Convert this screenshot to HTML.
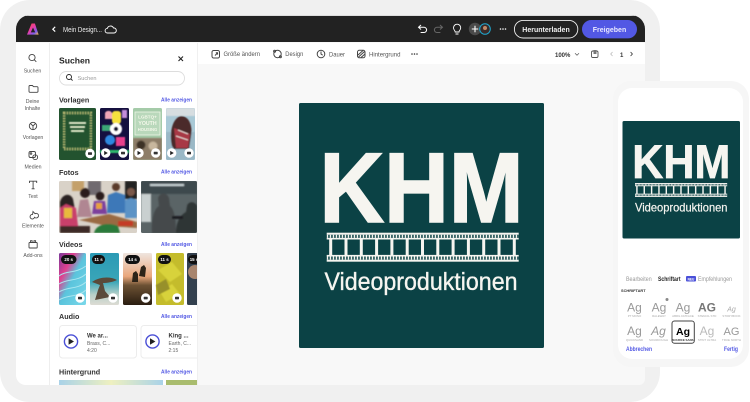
<!DOCTYPE html>
<html lang="de"><head><meta charset="utf-8"><title>Adobe Express</title>
<style>html,body{margin:0;padding:0;background:#fff;width:750px;height:402px;overflow:hidden}svg{display:block;filter:blur(.3px)}text{font-family:"Liberation Sans",sans-serif}</style></head>
<body>
<svg width="750" height="402" viewBox="0 0 750 402" xmlns="http://www.w3.org/2000/svg">
<defs>
<clipPath id="app"><path d="M16 29a14 14 0 0 1 14-14H631a14 14 0 0 1 14 14V379a6 6 0 0 1-6 6H26a10 10 0 0 1-10-10Z"/></clipPath>
<clipPath id="panel"><rect x="50" y="43" width="147" height="342"/></clipPath>
<clipPath id="p1"><rect x="59" y="181" width="78" height="52" rx="1.5"/></clipPath>
<clipPath id="p2"><rect x="141" y="181" width="56" height="52" rx="1.5"/></clipPath>
<clipPath id="t4"><rect x="166" y="108" width="29" height="52" rx="1.5"/></clipPath>
<clipPath id="t3"><rect x="133" y="108" width="29" height="52" rx="1.5"/></clipPath>
<filter id="soft" x="-5%" y="-5%" width="110%" height="110%"><feGaussianBlur stdDeviation=".9"/></filter>
<filter id="soft2" x="-5%" y="-5%" width="110%" height="110%"><feGaussianBlur stdDeviation=".5"/></filter>
<linearGradient id="logo" x1="0" y1="0" x2="1" y2="1"><stop offset="0" stop-color="#ff4b3a"/><stop offset=".45" stop-color="#e83ea8"/><stop offset=".75" stop-color="#7a5cf0"/><stop offset="1" stop-color="#ffc02e"/></linearGradient>
<linearGradient id="v1" x1="0" y1="0" x2="1" y2="1"><stop offset="0" stop-color="#7a3a9a"/><stop offset=".28" stop-color="#e0408f"/><stop offset=".5" stop-color="#5ac4dc"/><stop offset="1" stop-color="#7ad8ea"/></linearGradient>
<linearGradient id="v2" x1="0" y1="0" x2="0" y2="1"><stop offset="0" stop-color="#2b9ab5"/><stop offset=".55" stop-color="#3aa6b8"/><stop offset=".8" stop-color="#b8d0c8"/><stop offset="1" stop-color="#dddcd4"/></linearGradient>
<linearGradient id="v3" x1="0" y1="0" x2="0" y2="1"><stop offset="0" stop-color="#efe5df"/><stop offset=".45" stop-color="#e9a77c"/><stop offset=".62" stop-color="#6d5234"/><stop offset="1" stop-color="#2a1d10"/></linearGradient>
<linearGradient id="bgt" x1="0" y1="0" x2="1" y2="0"><stop offset="0" stop-color="#a9d2e8"/><stop offset=".5" stop-color="#eef0c0"/><stop offset="1" stop-color="#a9d2e8"/></linearGradient>
<pattern id="perf" x="0" y="0" width="3" height="3" patternUnits="userSpaceOnUse"><rect x="0" width="1.5" height="3" fill="#f6f5f0"/></pattern>
<g id="f"><rect x="0" y="0" width="192" height="2"/><rect x="0" y="27" width="192" height="2"/><rect x="0" y="5.2" width="192" height="1.6"/><rect x="0" y="22.2" width="192" height="1.6"/><rect x="0" y="2" width="192" height="3.200" fill="url(#perf)"/><rect x="0" y="23.800" width="192" height="3.200" fill="url(#perf)"/><path d="M4 6v17M19.300 6v17M34.600 6v17M49.900 6v17M65.200 6v17M80.500 6v17M95.800 6v17M111.100 6v17M126.400 6v17M141.700 6v17M157 6v17M172.300 6v17M187.600 6v17" stroke-width="3" stroke="#f6f5f0" fill="none"/></g>
<g id="pb"><circle r="4.700" fill="#fff"/><path d="M-1.500-2.100 2.100 0-1.500 2.100Z" fill="#222"/></g>
<g id="cb"><circle r="4.700" fill="#fff"/><rect x="-2" y="-1.300" width="4" height="2.700" rx=".6" fill="#333"/></g>
</defs>

<!-- device frame -->
<rect x="0" y="0" width="660" height="402" rx="30" fill="#f0f0f0"/>
<g clip-path="url(#app)">
<rect x="16" y="15" width="629" height="370" fill="#f8f8f8"/>
<rect x="16" y="15" width="629" height="27" fill="#222"/>
<rect x="16" y="15" width="629" height="1" fill="#ddd"/>
<rect x="16" y="43" width="629" height="21" fill="#fff"/>
<rect x="16" y="43" width="33" height="342" fill="#fff"/>
<rect x="49" y="43" width="1" height="342" fill="#eee"/>
<rect x="50" y="43" width="147" height="342" fill="#fff"/>
<rect x="197" y="43" width="1" height="342" fill="#f0f0f0"/>
</g>

<!-- top bar -->
<path d="M31.600 23.500h3.300L38.600 34.600H27Z" fill="url(#logo)"/>
<path d="M33 27.500 30.800 32.400h4.400Z" fill="#222"/>
<path d="M55.200 26.800 52.800 29.200l2.400 2.400" stroke="#fff" stroke-width="1.200" fill="none"/>
<text x="63" y="31.800" font-size="7.400" fill="#eee" textLength="39" lengthAdjust="spacingAndGlyphs">Mein Design...</text>
<path d="M107.500 33a2.300 2.300 0 0 1-.2-4.600 3.300 3.300 0 0 1 6.200-.4 2.500 2.500 0 0 1 .6 5Z" stroke="#fff" stroke-width=".9" fill="none"/>
<path d="M421 25l-2.500 2.300 2.500 2.200M418.600 27.300h5.400a2.600 2.600 0 0 1 0 5.200h-3.400" stroke="#fff" stroke-width="1" fill="none"/>
<path d="M440 25l2.500 2.300-2.500 2.200M442.400 27.300H437a2.600 2.600 0 0 0 0 5.200h3.400" stroke="#666" stroke-width="1" fill="none"/>
<path d="M455.200 32c0-1.600-1.700-1.800-1.700-4.200a3.600 3.600 0 0 1 7.200 0c0 2.400-1.700 2.600-1.700 4.200ZM455.500 34h3" stroke="#fff" stroke-width=".9" fill="none"/>
<circle cx="475" cy="29" r="6.200" fill="#4a4a4a"/>
<path d="M471.800 29h6.400M475 25.800v6.400" stroke="#fff" stroke-width="1.100"/>
<circle cx="485" cy="29" r="5.300" fill="#3a2a28" stroke="#1fa8d0" stroke-width="1"/>
<circle cx="485" cy="28" r="2" fill="#c08a68"/>
<circle cx="500.500" cy="29" r=".8" fill="#fff"/><circle cx="503" cy="29" r=".8" fill="#fff"/><circle cx="505.500" cy="29" r=".8" fill="#fff"/>
<rect x="514.400" y="20.400" width="63.400" height="17.600" rx="8.800" fill="#222" stroke="#eee" stroke-width=".9"/>
<text x="546" y="31.800" font-size="7" font-weight="bold" fill="#eee" text-anchor="middle">Herunterladen</text>
<rect x="582" y="20" width="55" height="18.400" rx="9.200" fill="#5258e4"/>
<text x="609.500" y="31.800" font-size="7" font-weight="bold" fill="#e8e8ff" text-anchor="middle">Freigeben</text>

<!-- toolbar -->
<g fill="none" stroke="#444" stroke-width="1">
<rect x="212" y="50.500" width="7.500" height="7.500" rx="1.600"/><path d="M215 55.500l2.500-2.500M215.800 52.800h1.800v1.800"/>
<circle cx="277.500" cy="54" r="3.700"/><circle cx="274.600" cy="51.200" r="1"/><circle cx="280.400" cy="56.800" r="1"/>
<circle cx="321" cy="54" r="3.800"/><path d="M321 51.500V54l1.700 1.200"/>
<rect x="357.500" y="50.300" width="7.500" height="7.500" rx="1.800"/><path d="M358 55l5-4.500M358.500 57l6-5.500M361 57.500l4-3.500"/>
</g>
<g font-size="6.200" fill="#555" lengthAdjust="spacingAndGlyphs">
<text x="223.500" y="56" textLength="36.500" lengthAdjust="spacingAndGlyphs">Größe ändern</text>
<text x="285.300" y="56" textLength="18" lengthAdjust="spacingAndGlyphs">Design</text>
<text x="329" y="56.300" textLength="16" lengthAdjust="spacingAndGlyphs">Dauer</text>
<text x="369" y="56.300" textLength="31.500" lengthAdjust="spacingAndGlyphs">Hintergrund</text>
</g>
<circle cx="412" cy="54" r=".8" fill="#333"/><circle cx="414.500" cy="54" r=".8" fill="#333"/><circle cx="417" cy="54" r=".8" fill="#333"/>
<text x="555" y="57" font-size="6" font-weight="bold" fill="#333">100%</text>
<path d="M575 53.200l2 2 2-2" stroke="#555" stroke-width=".7" fill="none"/>
<rect x="591.500" y="51" width="6.500" height="6.500" rx="1.400" fill="none" stroke="#555" stroke-width=".9"/><rect x="593.500" y="50" width="3" height="4" fill="#777"/>
<path d="M612.500 52l-1.800 2 1.800 2" stroke="#bbb" stroke-width=".8" fill="none"/>
<text x="620" y="57" font-size="6" font-weight="bold" fill="#333">1</text>
<path d="M630.600 52l1.800 2-1.800 2" stroke="#333" stroke-width=".8" fill="none"/>

<!-- left rail -->
<g fill="none" stroke="#444" stroke-width=".9">
<circle cx="32" cy="57.500" r="3.100"/><path d="M34.200 59.700l2.100 2.100"/>
<path d="M29 86.500a1 1 0 0 1 1-1h2.400l1.200 1.200H37a1 1 0 0 1 1 1v3.600a1 1 0 0 1-1 1h-7a1 1 0 0 1-1-1Z"/>
<circle cx="33" cy="126" r="3.700"/><path d="M30.400 123.400l2.600 2.600 2.600-2.600M33 126v3.600"/>
<rect x="29" y="151.500" width="6.500" height="6" rx="1.500"/><circle cx="35.200" cy="157.200" r="2.400"/><circle cx="31" cy="153.500" r=".8"/>
<path d="M29.500 183v-1.800h7.200V183M33.100 181.200v7.600M31.600 188.800h3"/>
<path d="M33 211.500l2 2.200a2.300 2.300 0 1 1-.4 3.600 2.300 2.300 0 1 1-2-2.900l.4-2.900Z"/>
<rect x="29" y="242.500" width="8.200" height="5.500" rx=".8"/><path d="M30.500 242.500v-1.800h1.600v1.800M34 242.500v-1.800h1.600v1.800"/>
</g>
<g font-size="5.200" fill="#555" text-anchor="middle">
<text x="32.500" y="72.300">Suchen</text>
<text x="32.500" y="103">Deine</text><text x="32.500" y="110">Inhalte</text>
<text x="33" y="139">Vorlagen</text>
<text x="33" y="168.500">Medien</text>
<text x="33" y="198">Text</text>
<text x="33" y="227.500">Elemente</text>
<text x="33" y="257">Add-ons</text>
</g>

<!-- panel -->
<g clip-path="url(#panel)">
<text x="59" y="63.500" font-size="8.600" font-weight="bold" fill="#222">Suchen</text>
<path d="M178.500 56.500l4.500 4.500m0-4.500l-4.500 4.500" stroke="#222" stroke-width="1.100"/>
<rect x="59.500" y="71.500" width="125" height="13.500" rx="6.700" fill="#fff" stroke="#ddd" stroke-width=".9"/>
<circle cx="69" cy="77" r="2.500" fill="none" stroke="#222" stroke-width=".9"/><path d="M70.800 78.800l1.800 1.800" stroke="#222" stroke-width=".9"/>
<text x="77.500" y="80.200" font-size="5.600" fill="#999">Suchen</text>

<g font-size="7.200" font-weight="bold" fill="#333">
<text x="59" y="102.500">Vorlagen</text><text x="59" y="174.800">Fotos</text><text x="59" y="247">Videos</text><text x="59" y="319">Audio</text><text x="59" y="374.500">Hintergrund</text>
</g>
<g font-size="5.300" fill="#5258e4" font-weight="bold">
<text x="161" y="101.500" textLength="31" lengthAdjust="spacingAndGlyphs">Alle anzeigen</text><text x="161" y="173.500" textLength="31" lengthAdjust="spacingAndGlyphs">Alle anzeigen</text><text x="161" y="246" textLength="31" lengthAdjust="spacingAndGlyphs">Alle anzeigen</text><text x="161" y="318" textLength="31" lengthAdjust="spacingAndGlyphs">Alle anzeigen</text><text x="161" y="373.500" textLength="31" lengthAdjust="spacingAndGlyphs">Alle anzeigen</text>
</g>

<!-- templates -->
<rect x="59" y="108" width="37" height="52" rx="1.500" fill="#23532f"/>
<g filter="url(#soft2)">
<rect x="64" y="113" width="27" height="36" fill="none" stroke="#a9ad6c" stroke-width="3" stroke-dasharray="1.600 1"/>
<rect x="69" y="122" width="17" height="2" fill="#dfe6c8"/><rect x="70" y="126" width="15" height="2" fill="#dfe6c8"/><rect x="71" y="130" width="13" height="2" fill="#dfe6c8"/>
</g>
<rect x="100" y="108" width="29" height="52" rx="1.500" fill="#15103f"/>
<g filter="url(#soft2)">
<path d="M105 113a4 4 0 0 1 7 0v6h-7Z" fill="#f2a7b8"/><rect x="112" y="111" width="9" height="13" rx="3" fill="#f6e13c"/><rect x="122" y="110" width="5" height="8" fill="#c38cdb"/>
<rect x="102" y="125" width="9" height="6" fill="#3aa776"/><circle cx="116" cy="129" r="6" fill="#fff"/><circle cx="116" cy="129" r="2.200" fill="#18132f"/>
<circle cx="110" cy="140" r="5" fill="#2d88e0"/><rect x="116" y="137" width="9" height="9" fill="#e8418c"/><rect x="100" y="150" width="29" height="3" fill="#2fb56c"/>
</g>
<rect x="133" y="108" width="29" height="52" rx="1.500" fill="#a5cba9"/>
<rect x="135" y="112" width="25" height="23" fill="#b9d8bb" stroke="#eef5e6" stroke-width=".8"/>
<text x="147.500" y="118.500" font-size="4.600" font-weight="bold" fill="#f4f8ea" text-anchor="middle">LGBTQ+</text>
<text x="147.500" y="125" font-size="5.200" font-weight="bold" fill="#f4f8ea" text-anchor="middle">YOUTH</text>
<text x="147.500" y="131" font-size="4.200" font-weight="bold" fill="#f4f8ea" text-anchor="middle">HOUSING</text>
<g clip-path="url(#t3)"><g filter="url(#soft)"><rect x="133" y="138" width="29" height="22" fill="#8d7d68"/><circle cx="141" cy="145" r="4.500" fill="#3d3026"/><circle cx="153" cy="146" r="4.500" fill="#c8b79e"/></g></g>
<rect x="166" y="108" width="29" height="52" rx="1.500" fill="#a9c9d6"/>
<g clip-path="url(#t4)"><g filter="url(#soft2)">
<rect x="166" y="108" width="29" height="8" fill="#d6dde0"/><rect x="166" y="132" width="29" height="28" fill="#9ab8c6"/>
<path d="M172 146c-3-12 0-28 9-30 7 0 12 8 10 20l-2 13h-15Z" fill="#4c2a2a"/><path d="M174 128l16 6-2 14h-12Z" fill="#a83845"/><path d="M178 130l10 4M176 136l12 4" stroke="#e6dcd8" stroke-width="1"/>
</g></g>
<use href="#cb" x="90" y="153.500"/>
<use href="#pb" x="105.700" y="153"/><use href="#cb" x="123" y="153"/>
<use href="#pb" x="139" y="153"/><use href="#cb" x="155.700" y="153"/>
<use href="#pb" x="171.700" y="153"/><use href="#cb" x="189" y="153"/>

<!-- photos -->
<rect x="59" y="181" width="78" height="52" rx="1.500" fill="#d9d2c8"/>
<g clip-path="url(#p1)"><g filter="url(#soft)">
<rect x="72" y="181" width="12" height="10" fill="#c4a06a"/><rect x="88" y="181" width="13" height="14" fill="#6f6a70"/><rect x="125" y="181" width="12" height="18" fill="#222"/>
<path d="M60 232v-30c2-8 10-10 13-3l6 33Z" fill="#2c2020"/><path d="M60 226v-18l6-4 10 4 2 18Z" fill="#c9406a"/><rect x="64" y="208" width="8" height="10" fill="#e8b93e"/>
<circle cx="85" cy="193" r="5" fill="#2a1e1e"/><path d="M77 217l3-17 8-1 4 18Z" fill="#b08692"/>
<circle cx="100" cy="196" r="4.400" fill="#2a1e1e"/><path d="M92 214l2-13 11 0 2 13Z" fill="#7d3f9c"/><rect x="96" y="203" width="6" height="6" fill="#e8a13e"/>
<circle cx="116" cy="187" r="4" fill="#5a3a2c"/><path d="M107 213l1-18 8-3 9 3 1 18Z" fill="#3c78b8"/>
<circle cx="131" cy="192" r="4" fill="#7a5848"/><path d="M125 218v-18l6-2 6 2v18Z" fill="#5c93c6"/>
<path d="M79 220l30-6 28 8v6l-30-2Z" fill="#9a6a42"/><path d="M94 233c2-9 14-11 24-7l2 7Z" fill="#2a7a3a"/><rect x="118" y="221" width="15" height="5" fill="#c43a28"/><rect x="60" y="226" width="30" height="7" fill="#3c2a26"/>
</g></g>
<rect x="141" y="181" width="56" height="52" rx="1.500" fill="#5a6466"/>
<g clip-path="url(#p2)"><g filter="url(#soft)">
<rect x="141" y="181" width="56" height="13" fill="#3e4a4e"/><rect x="150" y="184" width="34" height="2" fill="#c8d2d4"/><rect x="141" y="194" width="10" height="28" fill="#c9d0d0"/>
<path d="M152 233c-1-14 2-24 7-27l-1-8c2-6 9-6 11 0l1 8c4 3 6 12 6 27Z" fill="#454a4c"/><path d="M176 233c0-10 4-18 10-21l1-6c1-5 8-5 10 0v27Z" fill="#2e3436"/><rect x="172" y="216" width="11" height="3" fill="#1a1e20"/>
</g></g>

<!-- videos -->
<rect x="59" y="253" width="27" height="52" rx="1.500" fill="url(#v1)"/>
<path d="M59 276c8-6 16-2 27-10M59 284c9-6 18-2 27-10M59 292c9-6 18-2 27-10M59 300c9-6 18-2 27-10" stroke="#a9e6f0" stroke-width="1" fill="none"/>
<rect x="90" y="253" width="29" height="52" rx="1.500" fill="url(#v2)"/>
<path d="M92 282c7-5 18-6 25-2-4 2-10 3-14 3l2 8 5 6-15 3 3-10 2-5Z" fill="#5a4a3a"/>
<rect x="123" y="253" width="29" height="52" rx="1.500" fill="url(#v3)"/>
<path d="M132 282l1-9 3-2 2 3v8ZM139 276l2-9 3-2 2 3-1 9Z" fill="#2d2318"/>
<rect x="156" y="253" width="28" height="52" rx="1.500" fill="#c4bc2c"/><g filter="url(#soft2)"><path d="M158 270l14-8 10 12-12 8ZM160 292l12-8 8 10-14 8Z" fill="#d8d23a"/><path d="M156 285l10-6 4 10-12 6Z" fill="#97902a"/></g>
<rect x="187" y="253" width="12" height="52" rx="1.500" fill="#33404e"/><circle cx="195" cy="272" r="7" fill="#a8856e"/>
<g fill="#111"><rect x="61" y="255" width="15.500" height="9" rx="4.500"/><rect x="92" y="255" width="13" height="9" rx="4.500"/><rect x="125" y="255" width="15" height="9" rx="4.500"/><rect x="158" y="255" width="13" height="9" rx="4.500"/><rect x="188" y="255" width="12" height="9" rx="4.500"/></g>
<g font-size="4.400" font-weight="bold" fill="#fff" text-anchor="middle"><text x="68.700" y="261">20 s</text><text x="98.500" y="261">11 s</text><text x="132.500" y="261">14 s</text><text x="164.500" y="261">11 s</text><text x="194" y="261">15 s</text></g>
<use href="#cb" x="80" y="298"/><use href="#cb" x="113" y="298"/><use href="#cb" x="145.700" y="298"/><use href="#cb" x="177" y="298"/>

<!-- audio -->
<rect x="59.500" y="325.500" width="77" height="32.500" rx="3" fill="#fff" stroke="#ececec"/>
<circle cx="71" cy="341.500" r="6.600" fill="#fff" stroke="#4a4fd6" stroke-width="1.400"/><path d="M68.600 338.200l5.400 3.300-5.400 3.300Z" fill="#222"/>
<text x="87" y="337.500" font-size="6" font-weight="bold" fill="#333">We ar...</text>
<text x="87" y="345" font-size="5" fill="#666">Brass, C...</text><text x="87" y="352" font-size="5" fill="#666">4:20</text>
<rect x="141" y="325.500" width="70" height="32.500" rx="3" fill="#fff" stroke="#ececec"/>
<circle cx="152.500" cy="341.500" r="6.600" fill="#fff" stroke="#4a4fd6" stroke-width="1.400"/><path d="M150 338.200l5.400 3.300-5.400 3.300Z" fill="#222"/>
<text x="168.500" y="337.500" font-size="6" font-weight="bold" fill="#333">King ...</text>
<text x="168.500" y="345" font-size="5" fill="#666">Earth, C...</text><text x="168.500" y="352" font-size="5" fill="#666">2:15</text>

<!-- backgrounds -->
<rect x="59" y="380" width="104" height="6" fill="url(#bgt)"/>
<rect x="166" y="380" width="31" height="6" fill="#a9bc6e"/>
</g>

<!-- main design -->
<rect x="299" y="103" width="245" height="245" rx="1.500" fill="#0b4245"/>
<text x="319.500" y="222" font-size="99" font-weight="bold" fill="#f6f5f0" stroke="#f6f5f0" stroke-width="1.500" textLength="204" lengthAdjust="spacingAndGlyphs">KHM</text>
<use href="#f" x="326.700" y="232.700" fill="#f6f5f0"/>
<text x="324.500" y="290" font-size="25" fill="#f6f5f0" stroke="#f6f5f0" stroke-width=".35" textLength="193" lengthAdjust="spacingAndGlyphs">Videoproduktionen</text>

<!-- phone -->
<path d="M645 81h15V92h-15Z" fill="#f0f0f0"/>
<rect x="613" y="81" width="136" height="286" rx="18" fill="#f6f6f6"/>
<rect x="618" y="88" width="125" height="271" rx="14" fill="#fff"/>
<rect x="622.500" y="121" width="117.500" height="117.500" rx="1.500" fill="#0b4245"/>
<text x="632.300" y="178" font-size="47.500" font-weight="bold" fill="#f6f5f0" stroke="#f6f5f0" stroke-width=".7" textLength="98" lengthAdjust="spacingAndGlyphs">KHM</text>
<g transform="translate(635 183) scale(.48)"><use href="#f" fill="#f6f5f0"/></g>
<text x="635" y="211.700" font-size="12" fill="#f6f5f0" stroke="#f6f5f0" stroke-width=".2" textLength="92.500" lengthAdjust="spacingAndGlyphs">Videoproduktionen</text>
<text x="626" y="281" font-size="6" fill="#999" textLength="25.700" lengthAdjust="spacingAndGlyphs">Bearbeiten</text>
<text x="658" y="281" font-size="6" font-weight="bold" fill="#222" textLength="22.500" lengthAdjust="spacingAndGlyphs">Schriftart</text>
<rect x="686" y="276" width="10" height="5.500" rx="1" fill="#4a50d8"/>
<text x="691" y="280.300" font-size="3.200" font-weight="bold" fill="#fff" text-anchor="middle">NEU</text>
<text x="698" y="281" font-size="6" fill="#999" textLength="34" lengthAdjust="spacingAndGlyphs">Empfehlungen</text>
<text x="621" y="292" font-size="3.900" font-weight="bold" fill="#333">SCHRIFTART</text>
<circle cx="667" cy="299.500" r="1.500" fill="#888"/>
<g fill="#999" font-size="12" text-anchor="middle">
<text x="634.500" y="311.700">Ag</text>
<text x="659" y="311.700">Ag</text>
<text x="683" y="311.700">Ag</text>
<text x="707" y="311.700" font-family="Liberation Serif" font-weight="bold" fill="#777">AG</text>
<text x="731.500" y="311.700" font-size="7" font-style="italic" fill="#aaa">Ag</text>
<text x="634.500" y="335">Ag</text>
<text x="658.500" y="335" font-family="Liberation Serif" font-style="italic" fill="#999">Ag</text>
<text x="707" y="335" font-family="Liberation Serif" fill="#bbb">Ag</text>
<text x="731.500" y="335" font-size="11" fill="#999">AG</text>
</g>
<rect x="672" y="321" width="22.300" height="22.300" rx="2.500" fill="#fff" stroke="#444" stroke-width="1"/>
<text x="683" y="335" font-size="10.500" font-weight="bold" fill="#000" text-anchor="middle">Ag</text>
<g font-size="2.900" fill="#aaa" text-anchor="middle">
<text x="634.500" y="317">PT MONO</text><text x="659" y="317">RALEWAY</text><text x="683" y="317">ABRIL FATFACE</text><text x="707" y="317">STENCIL STD</text><text x="731.500" y="317">STORYBOOK</text>
<text x="634.500" y="341">QUICKSAND</text><text x="658.500" y="341">SOURDOUGH</text><text x="683" y="341" fill="#333" font-weight="bold">SOURCE SANS</text><text x="707" y="341">STINT ULTRA</text><text x="731.500" y="341">TRUE NORTH</text>
</g>
<text x="626" y="351" font-size="6" font-weight="bold" fill="#5258e4" textLength="26" lengthAdjust="spacingAndGlyphs">Abbrechen</text>
<text x="724" y="351" font-size="6" font-weight="bold" fill="#5258e4" textLength="14" lengthAdjust="spacingAndGlyphs">Fertig</text>
</svg>
</body></html>
